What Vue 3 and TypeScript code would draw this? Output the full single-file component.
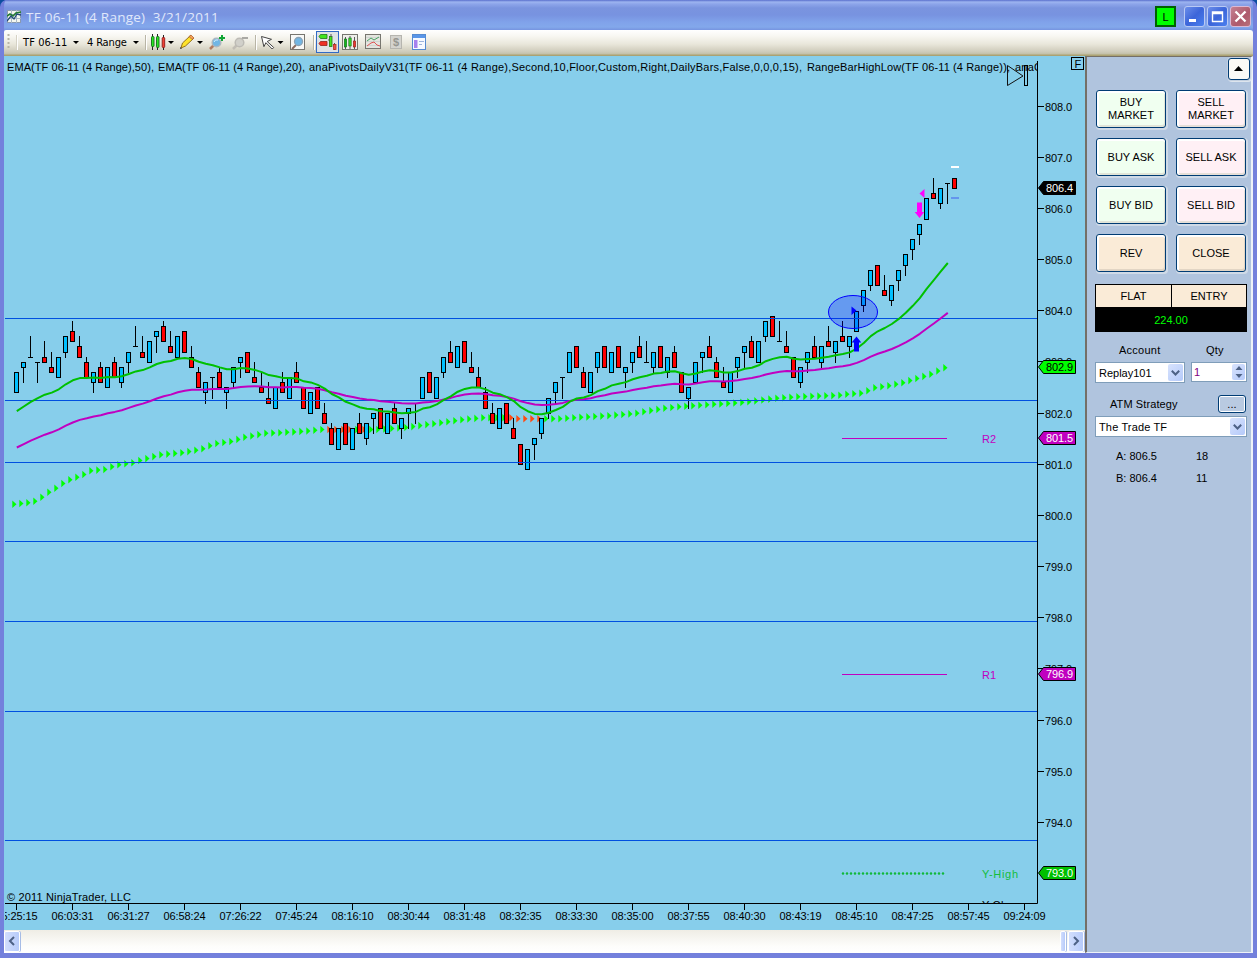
<script setup lang="ts">
interface Bar { x: number; high: number; low: number; top: number; bottom: number; kind: string }

const FIRST_X = 16
const STEP = 7

// Price levels are ticks (0.1) above 800.0
const yOf = (tick: number): number => 515.7 - tick * 5.115

// high, low, body top, body bottom, direction (b = up, r = down, d = flat)
const source = `28 24 28 24 b|30 26 30 29 b|35 31 31 31 d|30 26 30 30 d|34 30 31 30 r|32 28 29 28 r|31 27 31 27 b|35 31 35 32 b
38 34 36 34 r|35 31 33 31 r|31 27 30 27 r|28 24 28 26 b|30 26 29 26 r|29 25 29 25 b|31 27 30 27 r|29 25 29 26 b
32 28 32 30 b|37 33 33 33 d|35 31 32 31 r|34 30 34 30 b|36 32 36 35 b|38 34 37 34 r|36 32 33 32 r|35 31 35 31 b
36 32 36 32 r|33 29 31 29 r|29 25 28 25 r|26 22 26 24 b|27 23 27 27 d|29 25 28 25 r|25 21 25 24 b|29 25 29 26 b
31 27 31 30 b|32 28 32 28 r|30 26 27 26 r|28 24 25 24 r|26 22 23 22 r|25 21 25 21 b|28 24 26 24 r|27 23 27 23 b
30 26 28 26 r|25 21 25 21 r|24 20 24 20 b|25 21 25 21 r|22 18 20 18 r|18 14 17 14 r|17 13 17 13 b|18 14 18 14 r
17 13 17 13 b|20 16 18 16 r|18 14 18 15 b|20 16 20 19 b|21 17 21 17 r|20 16 20 16 b|22 18 21 18 r|19 15 19 17 b
21 17 21 20 b|22 18 22 22 d|27 23 27 23 b|28 24 28 24 r|27 23 27 23 b|31 27 31 28 b|34 30 32 30 r|33 29 33 29 b
34 30 34 30 r|32 28 29 28 r|29 25 27 25 r|25 21 24 21 r|22 18 20 18 r|21 17 21 17 b|22 18 22 18 r|19 15 17 15 r
14 10 14 10 r|13 9 13 9 b|15 11 15 14 b|19 15 19 16 b|23 19 23 20 b|26 22 26 24 b|27 23 27 27 d|32 28 32 28 b
33 29 33 29 r|29 25 28 25 r|28 24 28 24 b|32 28 32 29 b|33 29 33 29 r|32 28 32 28 b|33 29 33 29 r|29 25 29 28 b
32 28 32 30 b|35 31 33 31 r|34 30 30 30 d|32 28 32 29 b|33 29 33 29 r|31 27 31 28 b|33 29 32 29 r|28 24 28 24 r
25 21 25 23 b|30 26 30 26 b|32 28 32 31 b|35 31 33 31 r|31 27 30 27 r|29 25 26 25 r|28 24 28 24 b|31 27 31 29 b
33 29 33 32 b|35 31 34 31 r|34 30 34 30 b|38 34 38 35 b|39 35 39 35 r|38 34 34 34 d|36 32 33 32 r|31 27 31 27 r
29 25 29 26 b|32 28 32 30 b|35 31 33 31 r|33 29 33 30 b|37 33 34 33 r|34 30 34 32 b|38 34 35 34 r|35 31 35 33 b
40 36 40 36 b|44 40 44 41 b|48 44 48 45 b|49 45 49 45 r|47 43 44 43 r|45 41 45 42 b|48 44 48 46 b|51 47 51 49 b
54 50 54 52 b|57 53 57 55 b|62 58 62 58 b|66 62 63 62 r|64 60 64 61 b|65 61 65 65 d|66 64 66 64 r`

const rows = source.split(/[|\n]/).map((s) => s.trim().split(' '))
const bars: Bar[] = rows.map((f, i) => ({
  x: FIRST_X + i * STEP,
  high: Math.round(yOf(+f[0]) - 0.5),
  low: Math.round(yOf(+f[1]) - 0.5),
  top: Math.round(yOf(+f[2]) - 0.5),
  bottom: Math.round(yOf(+f[3]) - 0.5),
  kind: f[4],
}))

const closes: number[] = rows.map((f) => (f[4] === 'b' ? +f[2] : +f[3]))

function ema(period: number, seed: number): string {
  const k = 2 / (period + 1)
  let v = seed
  const pts: string[] = []
  closes.slice(0, -1).forEach((c, i) => {
    if (i > 0) v += (c - v) * k
    pts.push(`${FIRST_X + 0.8 + i * STEP},${(yOf(v) + 0.3).toFixed(1)}`)
  })
  return pts.join(' ')
}
const ema20 = ema(20, 20.5)
const ema50 = ema(50, 13.4)

// bar index, y: values between the anchors are interpolated
const anchors: number[][] = [
  [0, 504.3], [1, 503.5], [2, 502.7], [3, 501.3], [4, 497.3], [5, 492.3], [6, 488.3], [7, 483.5], [8, 479.7], [9, 477.3],
  [10, 474.5], [11, 470.8], [13, 469.5], [14, 466.7], [15, 464.8], [17, 462.7], [18, 460.5], [21, 454.7], [24, 452.8],
  [26, 450.3], [27, 448.7], [28, 445.7], [29, 443.5], [31, 441.5], [33, 437.3], [36, 433.3], [38, 432.7], [42, 431],
  [44, 429.5], [52, 429.5], [56, 427.5], [60, 423.7], [64, 419.7], [67, 417.7], [71, 417.7], [72, 418.7], [78, 418.7],
  [82, 416.9], [85, 415.7], [89, 413.3], [90, 411.7], [93, 408.3], [95, 406.7], [99, 404.7], [103, 403], [105, 401.7],
  [109, 398.3], [112, 396.8], [118, 395.3], [119, 394.3], [121, 393.3], [122, 390.7], [123, 387.7], [125, 385.7],
  [127, 382.7], [131, 374.3], [133, 367.7],
]
const orange = [45, 46, 47, 48, 50, 71, 72, 73, 74, 75]
const arrows = Array.from({ length: 134 }, (_, i) => {
  const n = anchors.findIndex((a) => a[0] >= i)
  const b = anchors[n]
  const a = n > 0 ? anchors[n - 1] : b
  const t = b[0] === a[0] ? 0 : (i - a[0]) / (b[0] - a[0])
  const y = a[1] + (b[1] - a[1]) * t
  const x = 12.3 + i * STEP
  return { d: `M${x} ${(y - 3.8).toFixed(1)}l4.2 3.8l-4.2 3.8z`, fill: orange.includes(i) ? '#ff4a10' : '#00ff00' }
})

const levels = [318, 400, 462, 541, 621, 711, 840]
const prices = Array.from({ length: 15 }, (_, i) => ({ label: (808 - i).toFixed(1), y: Math.floor(106.1 + i * 51.17) }))
const times = ['05:25:15', '06:03:31', '06:31:27', '06:58:24', '07:26:22', '07:45:24', '08:16:10', '08:30:44', '08:31:48',
  '08:32:35', '08:33:30', '08:35:00', '08:37:55', '08:40:30', '08:43:19', '08:45:10', '08:47:25', '08:57:45', '09:24:09']
const tags = [
  { y: 188, text: '806.4', fill: '#000', ink: '#fff' },
  { y: 367, text: '802.9', fill: '#00ff00', ink: '#000' },
  { y: 438, text: '801.5', fill: '#c000c0', ink: '#fff' },
  { y: 674, text: '796.9', fill: '#c000c0', ink: '#fff' },
  { y: 873, text: '793.0', fill: '#00c000', ink: '#fff' },
]
const legend = [
  { x: 7, w: 147, text: 'EMA(TF 06-11 (4 Range),50),' },
  { x: 158, w: 147, text: 'EMA(TF 06-11 (4 Range),20),' },
  { x: 309, w: 493, text: 'anaPivotsDailyV31(TF 06-11 (4 Range),Second,10,Floor,Custom,Right,DailyBars,False,0,0,0,15),' },
  { x: 807, w: 203, text: 'RangeBarHighLow(TF 06-11 (4 Range)),' },
  { x: 1015, w: 27, text: 'anaC' },
]
const orders = [
  { text: 'BUY\nMARKET', tone: 'buy' }, { text: 'SELL\nMARKET', tone: 'sell' },
  { text: 'BUY ASK', tone: 'buy' }, { text: 'SELL ASK', tone: 'sell' },
  { text: 'BUY BID', tone: 'buy' }, { text: 'SELL BID', tone: 'sell' },
  { text: 'REV', tone: 'flat' }, { text: 'CLOSE', tone: 'flat' },
]
</script>

<template>
  <div class="window">
    <header class="title">
      <svg class="app-icon" viewBox="7 9 15 14" width="15" height="14">
        <rect x="7.5" y="9.5" width="13" height="12" fill="#f4f6ee" stroke="#8a9ab0" />
        <path d="M7 13.5h14M7 17.5h14M11.5 9v13M16.5 9v13" stroke="#a9b8c8" />
        <path d="M7 15l3 -2l3 2l3 -3l5 -1" fill="none" stroke="#227a30" stroke-width="1.7" />
        <path d="M7 20l4 -5l3 3l3 -5l4 1" fill="none" stroke="#234b78" stroke-width="1.3" />
      </svg>
      <span class="title-text">TF 06-11 (4 Range)&nbsp; 3/21/2011</span>
      <span class="link-box">L</span>
      <span class="caption"><svg width="20" height="20"><rect x="4" y="12" width="7" height="3" fill="#fff" /></svg></span>
      <span class="caption"><svg width="20" height="20"><path d="M4.500 5h10v9.500h-10zM4 6.500h11" fill="none" stroke="#fff" stroke-width="1.400" /></svg></span>
      <span class="caption close"><svg width="20" height="20"><path d="M4.500 4.500l10 10M14.500 4.500l-10 10" stroke="#fff" stroke-width="2.300" /></svg></span>
    </header>

    <nav class="toolbar">
      <svg viewBox="4 30 18 25"><path d="M8.500 34v15" stroke="#b8b5a6" stroke-width="2" stroke-dasharray="2 2" /><path d="M17.500 35v15" stroke="#fff" /><path d="M16.500 35v15" stroke="#d5d2c5" /></svg>
      <span class="tool-text first">TF 06-11</span>
      <svg viewBox="71 30 15 25"><path d="M73 41h6l-3 3z" /></svg>
      <span class="tool-text">4 Range</span>
      <svg viewBox="130 30 14 25"><path d="M133 41h6l-3 3z" /></svg>
      <svg viewBox="144 30 6 25"><path d="M145.500 35v15" stroke="#b8b5a6" /><path d="M146.500 35v15" stroke="#fff" /></svg>
      <svg viewBox="150 30 16 25">
        <path d="M152.500 34v16M157.500 34v16M163.500 35v15" stroke="#222" />
        <rect x="151.500" y="36.500" width="2.500" height="10" rx=".8" fill="#29e522" stroke="#126b18" stroke-width=".9" />
        <rect x="156.500" y="36.500" width="2.500" height="11" rx=".8" fill="#29e522" stroke="#126b18" stroke-width=".9" />
        <rect x="162.200" y="37.500" width="2.500" height="10" rx=".8" fill="#f04335" stroke="#901818" stroke-width=".9" />
      </svg>
      <svg viewBox="166 30 12 25"><path d="M168 41h6l-3 3z" /></svg>
      <svg viewBox="178 30 18 25"><path d="M181 48l1.500 -5l8 -7.500l3 3l-8 7.500z" fill="#ffe32a" stroke="#93701c" /><path d="M189 36.500l2 -1.500l3 3l-2 1.500z" fill="#f4a05c" stroke="#a75a24" stroke-width=".7" /><path d="M180 49l2 -.5l-1.500 -1.500z" fill="#333" /></svg>
      <svg viewBox="196 30 10 25"><path d="M197 41h6l-3 3z" /></svg>
      <svg viewBox="206 30 22 25"><path d="M214 45l-4 4" stroke="#b27b60" stroke-width="2.500" /><circle cx="216.500" cy="42.500" r="4.300" fill="#71b6e4" stroke="#acb7bf" stroke-width="1.500" /><path d="M214 42q1 -3 4 -2" stroke="#d4f0ff" fill="none" /><path d="M222 35v6M219 38h6" stroke="#10a534" stroke-width="2" /></svg>
      <svg viewBox="228 30 26 25"><path d="M237 45l-4 4" stroke="#c1bdb5" stroke-width="2.500" /><circle cx="239.500" cy="42.500" r="4.300" fill="#d1d0ca" stroke="#bdbbb5" stroke-width="1.500" /><path d="M242 38h6" stroke="#aaa9a4" stroke-width="2" /></svg>
      <svg viewBox="254 30 6 25"><path d="M255.500 35v15" stroke="#b8b5a6" /><path d="M256.500 35v15" stroke="#fff" /></svg>
      <svg viewBox="260 30 16 25"><path d="M261.500 36.500l10 2.800l-4.300 2.200l6.500 6l-1.500 1.500l-6.300 -6.300l-2 4z" fill="#fff" stroke="#444" /></svg>
      <svg viewBox="276 30 10 25"><path d="M277.500 41h6l-3 3z" /></svg>
      <svg viewBox="286 30 24 25"><rect x="290.500" y="34.500" width="14" height="15" fill="#f8f8f6" stroke="#77766f" /><path d="M296 45l-4 4" stroke="#8b6d62" stroke-width="2" /><circle cx="298.500" cy="41.500" r="4" fill="#71b6e4" stroke="#8ba3b5" stroke-width="1.300" /></svg>
      <svg viewBox="310 30 6 25"><path d="M313.500 35v15" stroke="#b8b5a6" /><path d="M314.500 35v15" stroke="#fff" /></svg>
      <svg viewBox="316 30 23 25"><rect x="316.500" y="31.500" width="22" height="21" fill="#dfe3e5" stroke="#316ac5" /><path d="M319 36.500l1.500 -2h6.500v4h-6.500z" fill="#42e51e" stroke="#207818" stroke-width=".8" /><path d="M319 43.500l1.500 -2h6.500v4h-6.500z" fill="#ee3026" stroke="#9a2018" stroke-width=".8" /><path d="M328 40h3" stroke="#555" /><rect x="329.500" y="36.500" width="2.500" height="10" fill="#42e51e" stroke="#207818" stroke-width=".8" /><path d="M334.500 43v7M331 34v3" stroke="#555" /><rect x="333.500" y="44.500" width="2.500" height="5" fill="#ee5144" stroke="#b42b24" stroke-width=".8" /></svg>
      <svg viewBox="339 30 25 25"><rect x="342.500" y="34.500" width="15" height="15" fill="#eeeeea" stroke="#77766f" /><path d="M345.500 37v12M350 36v13M354.500 37v12" stroke="#333" stroke-width=".8" /><rect x="344.300" y="39" width="2.400" height="8" fill="#13b51d" stroke="#146a18" stroke-width=".6" /><rect x="348.800" y="38" width="2.400" height="8" fill="#39d52a" stroke="#146a18" stroke-width=".6" /><rect x="353.300" y="41" width="2.400" height="6" fill="#e83a2e" stroke="#8b2019" stroke-width=".6" /></svg>
      <svg viewBox="364 30 20 25"><rect x="365.500" y="34.500" width="15" height="14" fill="#e4e5df" stroke="#77766f" /><path d="M366 37.500h14M366 41.500h14M366 45.500h14" stroke="#d2d5d1" /><path d="M367 41l4 -3l3 2l5 -3" stroke="#48a263" fill="none" /><path d="M367 46l4 -3l3 -1l3 3l3 1" stroke="#df5555" fill="none" /></svg>
      <svg viewBox="384 30 24 25"><rect x="390.500" y="35.500" width="11" height="13" fill="#d4d3ce" stroke="#b6b5af" /><text x="396" y="46" text-anchor="middle" font-size="11" font-weight="bold" fill="#969690">$</text></svg>
      <svg viewBox="408 30 22 25"><rect x="412.500" y="34.500" width="13" height="15" fill="#f7faff" stroke="#568bd0" /><rect x="413" y="35" width="12" height="3" fill="#5a96e8" /><rect x="414" y="40" width="3.500" height="8" fill="#a781ee" /><path d="M419 41.500h5M419 44.500h3" stroke="#9eb5db" /></svg>
    </nav>

    <main class="body">
      <section class="chart-column">
        <svg class="chart" viewBox="4 56 1081 874" width="1081" height="874">
          <defs>
            <clipPath id="plot"><rect x="4" y="56" width="1033.500" height="847" /></clipPath>
            <clipPath id="timeline"><rect x="4" y="900" width="1081" height="30" /></clipPath>
          </defs>
          <path v-for="(a, i) in arrows" :key="'a' + i" :d="a.d" :fill="a.fill" />
          <g shape-rendering="crispEdges">
            <g v-for="(b, i) in bars" :key="i">
              <path :d="`M${b.x + 0.5} ${b.high}V${b.low + 1}`" stroke="#000" />
              <rect v-if="b.kind !== 'd'" :x="b.x - 1.5" :y="b.top + 0.5" width="4" :height="b.bottom - b.top" :fill="b.kind === 'b' ? '#00bfff' : '#ff0000'" stroke="#000" />
              <path v-else :d="`M${b.x - 2} ${b.top + 0.5}h5`" stroke="#000" />
            </g>
            <path v-for="y in levels" :key="y" :d="`M5 ${y + 0.5}H1037`" stroke="#0050e0" />
            <path d="M951 167h8" stroke="#fff" stroke-width="2" />
            <path d="M951 198h8" stroke="#6495ed" stroke-width="2" />
            <path d="M842 438.500H947M842 674.500H947" stroke="#c000c0" />
          </g>
          <polyline :points="ema50" fill="none" stroke="#c000c0" stroke-width="2" stroke-linejoin="round" />
          <polyline :points="ema20" fill="none" stroke="#00c000" stroke-width="2" stroke-linejoin="round" />
          <path d="M843 873.500H947" stroke="#10b83a" stroke-width="2.600" stroke-linecap="round" stroke-dasharray="0.010 3.990" />
          <ellipse cx="853" cy="312" rx="24.500" ry="16.500" fill="#0000ff" fill-opacity=".25" stroke="#0000ff" stroke-width="1" />
          <path d="M851.500 306.500l5 4l-5 4.500z" fill="#0000ff" />
          <path d="M856.500 336.500l4.800 6h-2.300v9h-5v-9h-2.300z" fill="#0000ff" />
          <path d="M919.500 218l-4.800 -6h2.300v-9.500h5v9.500h2.300z" fill="#ff00ff" />
          <path d="M924.500 189v9l-5 -4.500z" fill="#ff00ff" />

          <g clip-path="url(#plot)">
            <text v-for="l in legend" :key="l.x" :x="l.x" y="71" :textLength="l.w">{{ l.text }}</text>
            <text x="982" y="909" textLength="40">Y-Close</text>
          </g>
          <path d="M1007.500 65.500v20l15.500 -9.500z" fill="none" stroke="#111" />
          <rect x="1024.500" y="65.500" width="3" height="20" fill="none" stroke="#000" />
          <rect x="1071.500" y="57.500" width="12" height="12" fill="none" stroke="#000" />
          <text x="1074.500" y="68" font-size="11">F</text>

          <g fill="#c000c0">
            <text x="982" y="443">R2</text>
            <text x="982" y="679">R1</text>
          </g>
          <text x="982" y="878" fill="#14bd3c" textLength="36">Y-High</text>
          <text x="7" y="901" textLength="124">© 2011 NinjaTrader, LLC</text>

          <path d="M5 903.500H1037.500V61" fill="none" stroke="#000" />
          <g v-for="p in prices" :key="p.label">
            <path :d="`M1038 ${p.y + 0.5}h6`" stroke="#000" />
            <text x="1045" :y="p.y + 5" textLength="27">{{ p.label }}</text>
          </g>
          <g clip-path="url(#timeline)">
            <g v-for="(t, i) in times" :key="t">
              <path :d="`M${16.5 + i * 56} 904v6`" stroke="#000" />
              <text :x="16.500 + i * 56" y="920" text-anchor="middle" textLength="42">{{ t }}</text>
            </g>
            <rect x="4" y="911" width="1" height="12" fill="#87ceeb" />
          </g>
          <g v-for="g in tags" :key="g.text">
            <path :d="`M1038.500 ${g.y}l5 -6.500h32v13h-32z`" :fill="g.fill" stroke="#000" />
            <text x="1046" :y="g.y + 4" :fill="g.ink" textLength="27">{{ g.text }}</text>
          </g>
        </svg>
        <div class="scrollbar">
          <span class="scroll-btn"><svg width="14" height="16"><path d="M9 4L5 8l4 4" fill="none" stroke="#4d6185" stroke-width="2" /></svg></span>
          <span class="track"></span>
          <span class="thumb"></span>
          <span class="scroll-btn right"><svg width="14" height="16"><path d="M5 4l4 4l-4 4" fill="none" stroke="#4d6185" stroke-width="2" /></svg></span>
        </div>
      </section>

      <aside class="panel">
        <div class="collapse-row">
          <span class="xp-btn collapse"><svg width="10" height="6"><path d="M0 5h9L4.500 0z" /></svg></span>
        </div>
        <div class="orders">
          <span v-for="o in orders" :key="o.text" class="xp-btn order" :class="o.tone">{{ o.text }}</span>
        </div>
        <div class="position">
          <span class="cell">FLAT</span>
          <span class="cell entry">ENTRY</span>
          <span class="amount">224.00</span>
        </div>
        <div class="labels"><span class="account-label">Account</span><span class="qty-label">Qty</span></div>
        <div class="inputs">
          <span class="field account">Replay101<i class="drop"><svg width="9" height="6"><path d="M.8 .8l3.700 3.700l3.700 -3.700" /></svg></i></span>
          <span class="field qty">1
            <i class="drop spin"><svg width="8" height="12"><path class="solid" d="M4 0l3.500 4h-7zM4 12l3.500 -4h-7z" /></svg></i>
          </span>
        </div>
        <div class="strategy-row"><span>ATM Strategy</span><span class="xp-btn dots">...</span></div>
        <div class="field strategy">The Trade TF<i class="drop"><svg width="9" height="6"><path d="M.8 .8l3.700 3.700l3.700 -3.700" /></svg></i></div>
        <div class="quote"><span>A: 806.5</span><span>18</span></div>
        <div class="quote"><span>B: 806.4</span><span>11</span></div>
      </aside>
    </main>
  </div>
</template>

<style>
html, body { margin: 0; background: #0c4da0; overflow: hidden; }
</style>

<style scoped>
.window {
  box-sizing: border-box;
  width: 1257px;
  height: 958px;
  display: flex;
  flex-direction: column;
  border: solid #7380dc;
  border-width: 0 4px 5px;
  border-radius: 7px 7px 0 0;
  font: 11px "Liberation Sans", Arial, sans-serif;
  color: #000;
  background: #7c93df;
  overflow: hidden;
  position: relative;
}
.window::after {
  content: "";
  position: absolute;
  inset: 30px -4px -5px;
  border: solid #5058c0;
  border-width: 0 1px 2px;
  pointer-events: none;
}
.title {
  height: 30px;
  flex: none;
  display: flex;
  align-items: center;
  margin: 0 -4px;
  padding: 3px 6px 0 7px;
  box-sizing: border-box;
  background: linear-gradient(#5a6fcd 0, #9db4f0 2px, #8da5ea 4px, #7a94df 8px, #7893e0 15px, #80a2ea 22px, #83a8eb 27px, #7694e0 30px);
}
.title-text {
  flex: 1;
  margin-left: 4px;
  font: 13.5px "Open Sans", "Noto Sans", sans-serif;
  letter-spacing: 0.25px;
  color: #e0e8fb;
}
.link-box {
  width: 17px;
  height: 17px;
  border: 2px solid #006000;
  background: #00ff00;
  text-align: center;
  line-height: 18px;
  margin-right: 6px;
}
.caption {
  box-sizing: border-box;
  width: 21px;
  height: 21px;
  margin-left: 2px;
  border: 1px solid #b9c9f4;
  border-radius: 3px;
  background: linear-gradient(135deg, #6c8eea, #3c65d9 50%, #4a80ef);
}
.caption svg { display: block; }
.caption.close { background: linear-gradient(135deg, #c58193, #ae5a6c 60%, #b8707a); border-color: #dbb9d4; }
.toolbar {
  height: 26px;
  flex: none;
  box-sizing: border-box;
  display: grid;
  grid-template-columns: 18px 49px 15px 44px 14px 6px 16px 12px 18px 10px 22px 26px 6px 16px 10px 24px 6px 23px 25px 20px 24px 22px;
  background: linear-gradient(#fff 0, #f8f7f2 6px, #e9e7db 14px, #cdcab9 22px, #c3c0a8 24px, #aba272 25px, #aba272 26px);
  border-radius: 2px 3px 0 0;
}
.toolbar svg { width: 100%; height: 25px; display: block; }
.tool-text {
  font: 11px/25px "DejaVu Sans Condensed", "DejaVu Sans", sans-serif;
  font-stretch: condensed;
  letter-spacing: -0.15px;
  padding-left: 1px;
  white-space: nowrap;
}
.tool-text.first { letter-spacing: 0.1px; }
.body { flex: 1; display: flex; min-height: 0; }
.chart-column { width: 1081px; display: flex; flex-direction: column; background: #87ceeb; }
.chart { display: block; flex: none; font-size: 11px; }
.scrollbar {
  flex: 1;
  display: flex;
  align-items: center;
  box-sizing: border-box;
  padding: 1px 1px 1px 0;
  background: linear-gradient(#efede5, #fdfdfb 70%, #fff);
}
.scroll-btn, .thumb {
  box-sizing: border-box;
  width: 16px;
  height: 21px;
  border: 1px solid #fff;
  border-radius: 2px;
  background: linear-gradient(90deg, #d2defd, #b7cbfa);
  box-shadow: 1px 0 0 #a6bce6;
}
.scroll-btn svg { display: block; margin-top: 1px; }
.track { flex: 1; }
.thumb { width: 6px; margin-right: 2px; }
.panel {
  flex: 1;
  box-sizing: border-box;
  border-left: 2px solid #746f67;
  border-top: 1px solid #746f67;
  border-right: 2px solid #eef2f8;
  border-bottom: 1px solid #eef2f8;
  background: #b0c4de;
  padding: 1px 4px 0 8px;
}
.xp-btn {
  box-sizing: border-box;
  display: flex;
  align-items: center;
  justify-content: center;
  border: 1px solid #003c74;
  border-radius: 3px;
  background: #fbfaf6;
  box-shadow: 0 0 0 1px #c3d0e0, 1px 1px 0 1px #dde5ee;
  text-align: center;
}
.collapse-row { display: flex; justify-content: flex-end; margin-right: -3px; }
.collapse { width: 22px; height: 22px; }
.orders { display: grid; grid-template-columns: 70px 70px; gap: 10px; margin: 10px 0 0 1px; }
.order { height: 38px; white-space: pre; line-height: 13px; }
.order.buy { background: #f0fff0; box-shadow: inset 0 2px #fff, inset 2px 0 #fff, inset -1px -2px #e1e5d8, 1px 1px 0 1px #cfdae7; }
.order.sell { background: #fff0f5; box-shadow: inset 0 2px #fff, inset 2px 0 #fff, inset -1px -2px #e6dfd8, 1px 1px 0 1px #cfdae7; }
.order.flat { background: #faebd7; box-shadow: inset 0 2px #fff, inset 2px 0 #fff, inset -1px -2px #e2d5c4, 1px 1px 0 1px #cfdae7; }
.position {
  box-sizing: border-box;
  width: 152px;
  height: 48px;
  margin-top: 12px;
  display: grid;
  grid-template: 22px 24px / 75px 75px;
  border: 1px solid #000;
  background: #000;
  text-align: center;
  line-height: 22px;
}
.cell { background: #faebd7; }
.entry { border-left: 1px solid #000; }
.amount { grid-column: 1 / 3; color: #00ff00; line-height: 27px; }
.labels { display: flex; margin-top: 11px; height: 19px; line-height: 14px; letter-spacing: 0.25px; }
.account-label { width: 87px; padding-left: 24px; }
.qty-label { letter-spacing: 0.2px; }
.inputs { display: flex; gap: 6px; }
.field {
  box-sizing: border-box;
  display: flex;
  height: 21px;
  border: 1px solid #7f9db9;
  background: #fff;
  padding: 1px 1px 1px 3px;
  line-height: 18px;
}
.drop {
  width: 15px;
  margin-left: auto;
  display: flex;
  align-items: center;
  justify-content: center;
  border-radius: 2px;
  background: linear-gradient(135deg, #d8e3fd, #b5cafa);
}
.drop path { fill: none; stroke: #4d6185; stroke-width: 2; }
.drop .solid { fill: #4d6185; stroke: none; }
.account { width: 90px; }
.qty { width: 56px; height: 20px; padding-left: 2px; line-height: 16px; color: #800080; }
.spin { width: 13px; }
.strategy-row { display: flex; justify-content: space-between; align-items: center; height: 18px; margin: 12px 1px 3px 15px; letter-spacing: 0.1px; }
.dots { width: 28px; height: 18px; background: #b9cae1; border-width: 1px; box-shadow: inset 0 0 0 1px #fff; line-height: 12px; }
.strategy { width: 152px; letter-spacing: 0.15px; }
.quote { display: flex; height: 22px; align-items: center; padding-left: 21px; }
.quote span:first-child { width: 80px; }
.strategy + .quote { margin-top: 8px; }
</style>
